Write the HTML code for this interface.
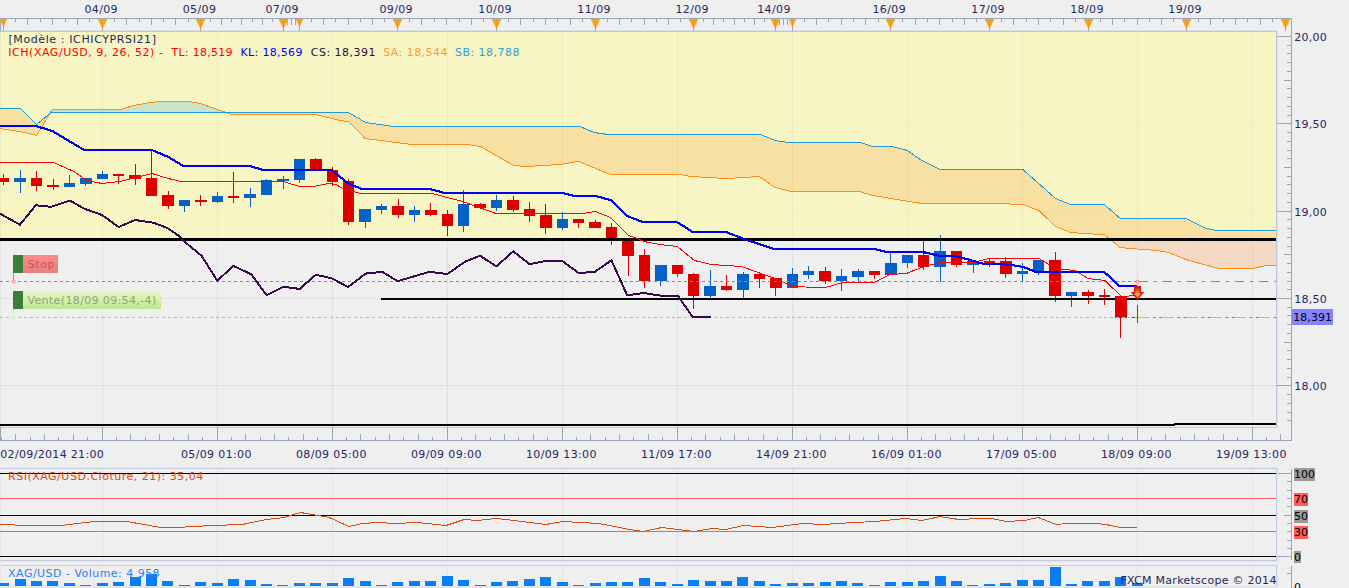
<!DOCTYPE html>
<html><head><meta charset="utf-8"><title>XAG/USD</title>
<style>
html,body{margin:0;padding:0;background:#efefef;}
body{width:1349px;height:588px;overflow:hidden;}
svg{display:block;font-family:'DejaVu Sans','Liberation Sans',sans-serif;font-size:11px;}
</style></head><body>
<svg width="1349" height="588" viewBox="0 0 1349 588">
<defs>
<linearGradient id="stopg" x1="0" y1="0" x2="0" y2="1"><stop offset="0" stop-color="#ff8a8a"/><stop offset="1" stop-color="#e88080"/></linearGradient>
<linearGradient id="venteg" x1="0" y1="0" x2="0" y2="1"><stop offset="0" stop-color="#e9f8c6"/><stop offset="1" stop-color="#bfe68e"/></linearGradient>
<linearGradient id="arr" x1="0" y1="0" x2="0" y2="1"><stop offset="0" stop-color="#c0200c"/><stop offset="0.55" stop-color="#f08a30"/><stop offset="1" stop-color="#ffc868"/></linearGradient>
<linearGradient id="cl" gradientUnits="userSpaceOnUse" x1="0" y1="238" x2="0" y2="238.01"><stop offset="0" stop-color="#f8e0a2"/><stop offset="1" stop-color="#f4dac3"/></linearGradient>
<clipPath id="cp"><rect x="0" y="31" width="1276" height="396"/></clipPath>
</defs>
<rect x="0" y="0" width="1349" height="588" fill="#efefef"/>
<!-- main chart background -->
<rect x="0" y="30" width="1278" height="1" fill="#dde2ec"/><rect x="0" y="31" width="1277" height="1" fill="#bcc7db"/>
<rect x="0" y="32" width="1276" height="207" fill="#f7f5c3"/>
<rect x="1276" y="31" width="1" height="397" fill="#bcc7db"/><rect x="1277" y="31" width="1" height="397" fill="#dde2ec"/>
<rect x="102" y="469" width="1" height="91" fill="#e2e2e2"/>
<rect x="102" y="566" width="1" height="20" fill="#e2e2e2"/>
<rect x="217" y="469" width="1" height="91" fill="#e2e2e2"/>
<rect x="217" y="566" width="1" height="20" fill="#e2e2e2"/>
<rect x="332" y="469" width="1" height="91" fill="#e2e2e2"/>
<rect x="332" y="566" width="1" height="20" fill="#e2e2e2"/>
<rect x="447" y="469" width="1" height="91" fill="#e2e2e2"/>
<rect x="447" y="566" width="1" height="20" fill="#e2e2e2"/>
<rect x="562" y="469" width="1" height="91" fill="#e2e2e2"/>
<rect x="562" y="566" width="1" height="20" fill="#e2e2e2"/>
<rect x="677" y="469" width="1" height="91" fill="#e2e2e2"/>
<rect x="677" y="566" width="1" height="20" fill="#e2e2e2"/>
<rect x="792" y="469" width="1" height="91" fill="#e2e2e2"/>
<rect x="792" y="566" width="1" height="20" fill="#e2e2e2"/>
<rect x="907" y="469" width="1" height="91" fill="#e2e2e2"/>
<rect x="907" y="566" width="1" height="20" fill="#e2e2e2"/>
<rect x="1022" y="469" width="1" height="91" fill="#e2e2e2"/>
<rect x="1022" y="566" width="1" height="20" fill="#e2e2e2"/>
<rect x="1137" y="469" width="1" height="91" fill="#e2e2e2"/>
<rect x="1137" y="566" width="1" height="20" fill="#e2e2e2"/>
<rect x="1252" y="469" width="1" height="91" fill="#e2e2e2"/>
<rect x="1252" y="566" width="1" height="20" fill="#e2e2e2"/>
<rect x="0" y="32" width="1" height="206" fill="#e9e7bd"/><rect x="0" y="241" width="1" height="186" fill="#e3e3e7"/>
<g clip-path="url(#cp)">
<polygon points="0.0,108.4 20.4,108.4 25.5,113.3 36.5,124.0 50.0,113.2 50.0,113.2 36.5,135.4 25.5,132.0 20.4,131.2 0.0,127.8" fill="url(#cl)"/>
<polygon points="50.0,113.2 51.0,112.4 52.3,112.4 120.4,112.4 133.4,112.4 150.0,112.4 160.2,112.4 188.0,112.4 196.4,112.4 203.8,112.4 211.2,112.4 220.5,112.4 226.0,112.4 227.3,112.4 227.3,112.4 226.0,111.9 220.5,110.4 211.2,107.2 203.8,104.5 196.4,102.6 188.0,101.5 160.2,101.5 150.0,102.6 133.4,105.6 120.4,109.4 52.3,109.4 51.0,111.5 50.0,113.2" fill="#c9e4c8"/>
<polygon points="227.3,112.4 231.6,112.4 315.9,112.4 331.7,112.4 340.0,112.4 348.4,112.4 365.2,122.1 365.7,122.4 393.8,126.2 411.6,126.2 467.8,126.2 480.5,126.2 513.7,126.2 526.4,126.2 559.6,126.2 578.7,126.2 580.0,126.2 594.0,132.0 608.0,134.4 610.6,134.4 680.4,134.4 690.6,134.4 726.3,134.4 759.5,134.4 760.8,134.4 774.8,140.3 788.8,142.3 791.4,142.3 859.0,142.3 860.3,142.3 873.0,146.1 892.1,146.1 907.4,150.5 920.2,158.9 921.5,159.6 939.8,169.3 996.7,169.2 1022.8,169.2 1023.3,169.6 1038.8,183.3 1055.6,198.1 1070.4,204.1 1100.0,204.1 1104.3,204.1 1104.6,204.4 1111.5,210.4 1119.9,217.8 1120.3,218.1 1129.0,218.1 1145.9,218.1 1156.6,218.1 1168.9,218.1 1185.7,218.1 1186.3,218.1 1204.0,227.0 1205.7,227.9 1217.3,230.2 1218.6,230.2 1253.0,230.2 1266.0,230.2 1276.0,230.2 1276.0,265.3 1266.0,265.5 1253.0,268.6 1218.6,268.6 1217.3,268.2 1205.7,264.8 1204.0,264.3 1186.3,259.6 1185.7,259.4 1168.9,252.0 1156.6,250.5 1145.9,249.0 1129.0,248.7 1120.3,247.5 1119.9,247.4 1111.5,240.1 1104.6,234.4 1104.3,234.4 1100.0,234.0 1070.4,232.0 1055.6,225.8 1038.8,210.3 1023.3,204.1 1022.8,204.1 996.7,203.0 939.8,203.0 921.5,203.0 920.2,202.8 907.4,200.6 892.1,198.0 873.0,194.8 860.3,191.6 859.0,191.3 791.4,191.3 788.8,190.6 774.8,186.9 760.8,177.1 759.5,176.2 726.3,178.3 690.6,176.2 680.4,174.2 610.6,174.2 608.0,173.2 594.0,167.5 580.0,161.9 578.7,161.4 559.6,164.5 526.4,166.5 513.7,165.3 480.5,146.6 467.8,144.3 411.6,144.3 393.8,141.9 365.7,138.1 365.2,138.0 348.4,121.0 340.0,120.6 331.7,118.7 315.9,114.0 231.6,114.0 227.3,112.4" fill="url(#cl)"/>
<rect x="102" y="32" width="1" height="206" fill="#000" fill-opacity="0.035"/>
<rect x="102" y="241" width="1" height="186" fill="#000" fill-opacity="0.055"/>
<rect x="217" y="32" width="1" height="206" fill="#000" fill-opacity="0.035"/>
<rect x="217" y="241" width="1" height="186" fill="#000" fill-opacity="0.055"/>
<rect x="332" y="32" width="1" height="206" fill="#000" fill-opacity="0.035"/>
<rect x="332" y="241" width="1" height="186" fill="#000" fill-opacity="0.055"/>
<rect x="447" y="32" width="1" height="206" fill="#000" fill-opacity="0.035"/>
<rect x="447" y="241" width="1" height="186" fill="#000" fill-opacity="0.055"/>
<rect x="562" y="32" width="1" height="206" fill="#000" fill-opacity="0.035"/>
<rect x="562" y="241" width="1" height="186" fill="#000" fill-opacity="0.055"/>
<rect x="677" y="32" width="1" height="206" fill="#000" fill-opacity="0.035"/>
<rect x="677" y="241" width="1" height="186" fill="#000" fill-opacity="0.055"/>
<rect x="792" y="32" width="1" height="206" fill="#000" fill-opacity="0.035"/>
<rect x="792" y="241" width="1" height="186" fill="#000" fill-opacity="0.055"/>
<rect x="907" y="32" width="1" height="206" fill="#000" fill-opacity="0.035"/>
<rect x="907" y="241" width="1" height="186" fill="#000" fill-opacity="0.055"/>
<rect x="1022" y="32" width="1" height="206" fill="#000" fill-opacity="0.035"/>
<rect x="1022" y="241" width="1" height="186" fill="#000" fill-opacity="0.055"/>
<rect x="1137" y="32" width="1" height="206" fill="#000" fill-opacity="0.035"/>
<rect x="1137" y="241" width="1" height="186" fill="#000" fill-opacity="0.055"/>
<rect x="1252" y="32" width="1" height="206" fill="#000" fill-opacity="0.035"/>
<rect x="1252" y="241" width="1" height="186" fill="#000" fill-opacity="0.055"/>
<rect x="0" y="123" width="1276" height="1" fill="#000" fill-opacity="0.025"/>
<rect x="0" y="211" width="1276" height="1" fill="#000" fill-opacity="0.025"/>
<rect x="0" y="298" width="1276" height="1" fill="#000" fill-opacity="0.055"/>
<rect x="0" y="385" width="1276" height="1" fill="#000" fill-opacity="0.055"/>
<polyline points="0.0,128.5 25.5,132.5 36.5,135.5 52.3,109.5 120.4,109.5 133.4,105.5 150.0,102.5 160.2,101.5 188.0,101.5 196.4,102.5 203.8,104.5 211.2,107.5 220.5,110.5 226.0,112.5 231.6,114.5 315.9,114.5 331.7,118.5 340.0,120.5 348.4,121.5 365.2,138.5 411.6,144.5 467.8,144.5 480.5,146.5 513.7,165.5 526.4,166.5 559.6,164.5 578.7,161.5 610.6,174.5 680.4,174.5 690.6,176.5 726.3,178.5 759.5,176.5 774.8,187.5 791.4,191.5 859.0,191.5 873.0,195.5 921.5,203.5 996.7,203.5 1023.3,204.5 1038.8,210.5 1055.6,226.5 1070.4,232.5 1100.0,234.5 1104.6,234.5 1111.5,240.5 1119.9,247.5 1129.0,248.5 1145.9,249.5 1156.6,250.5 1168.9,252.5 1185.7,259.5 1204.0,264.5 1218.6,268.5 1253.0,268.5 1266.0,265.5 1276.0,265.5" fill="none" stroke="#fd8e1c" stroke-width="1" shape-rendering="crispEdges"/>
<polyline points="0.0,108.5 20.4,108.5 36.5,124.5 51.0,112.5 340.0,112.5 348.4,112.5 365.7,122.5 393.8,126.5 580.0,126.5 594.0,132.5 608.0,134.5 760.8,134.5 774.8,140.5 788.8,142.5 860.3,142.5 873.0,146.5 892.1,146.5 907.4,150.5 920.2,159.5 939.8,169.5 1022.8,169.5 1055.6,198.5 1070.4,204.5 1104.3,204.5 1120.3,218.5 1186.3,218.5 1205.7,228.5 1217.3,230.5 1276.0,230.5" fill="none" stroke="#1f9adb" stroke-width="1" shape-rendering="crispEdges"/>
<rect x="3" y="174" width="1" height="11" fill="#dc0000"/>
<rect x="-2" y="178" width="11" height="4" fill="#dc0000"/>
<rect x="20" y="170" width="1" height="23" fill="#0560c8"/>
<rect x="14" y="178" width="12" height="4" fill="#0560c8"/>
<rect x="36" y="171" width="1" height="20" fill="#dc0000"/>
<rect x="31" y="178" width="11" height="8" fill="#dc0000"/>
<rect x="53" y="179" width="1" height="11" fill="#dc0000"/>
<rect x="47" y="185" width="12" height="2" fill="#dc0000"/>
<rect x="69" y="175" width="1" height="12" fill="#0560c8"/>
<rect x="64" y="183" width="11" height="4" fill="#0560c8"/>
<rect x="85" y="178" width="1" height="8" fill="#0560c8"/>
<rect x="80" y="178" width="12" height="6" fill="#0560c8"/>
<rect x="102" y="171" width="1" height="8" fill="#0560c8"/>
<rect x="97" y="174" width="11" height="5" fill="#0560c8"/>
<rect x="118" y="174" width="1" height="10" fill="#dc0000"/>
<rect x="113" y="174" width="11" height="2" fill="#dc0000"/>
<rect x="135" y="164" width="1" height="21" fill="#dc0000"/>
<rect x="129" y="175" width="12" height="4" fill="#dc0000"/>
<rect x="151" y="151" width="1" height="45" fill="#dc0000"/>
<rect x="146" y="178" width="11" height="18" fill="#dc0000"/>
<rect x="168" y="191" width="1" height="18" fill="#dc0000"/>
<rect x="162" y="195" width="12" height="11" fill="#dc0000"/>
<rect x="184" y="200" width="1" height="12" fill="#0560c8"/>
<rect x="179" y="200" width="11" height="6" fill="#0560c8"/>
<rect x="200" y="195" width="1" height="11" fill="#dc0000"/>
<rect x="195" y="200" width="12" height="2" fill="#dc0000"/>
<rect x="217" y="192" width="1" height="11" fill="#0560c8"/>
<rect x="212" y="196" width="11" height="6" fill="#0560c8"/>
<rect x="233" y="172" width="1" height="31" fill="#dc0000"/>
<rect x="228" y="196" width="11" height="2" fill="#dc0000"/>
<rect x="250" y="188" width="1" height="19" fill="#0560c8"/>
<rect x="244" y="194" width="12" height="4" fill="#0560c8"/>
<rect x="266" y="179" width="1" height="16" fill="#0560c8"/>
<rect x="261" y="180" width="11" height="15" fill="#0560c8"/>
<rect x="283" y="176" width="1" height="13" fill="#0560c8"/>
<rect x="277" y="179" width="12" height="2" fill="#0560c8"/>
<rect x="299" y="159" width="1" height="24" fill="#0560c8"/>
<rect x="294" y="159" width="11" height="21" fill="#0560c8"/>
<rect x="315" y="158" width="1" height="11" fill="#dc0000"/>
<rect x="310" y="159" width="12" height="10" fill="#dc0000"/>
<rect x="332" y="167" width="1" height="19" fill="#dc0000"/>
<rect x="327" y="170" width="11" height="12" fill="#dc0000"/>
<rect x="348" y="179" width="1" height="46" fill="#dc0000"/>
<rect x="343" y="181" width="11" height="41" fill="#dc0000"/>
<rect x="365" y="209" width="1" height="19" fill="#0560c8"/>
<rect x="359" y="209" width="12" height="13" fill="#0560c8"/>
<rect x="381" y="204" width="1" height="10" fill="#0560c8"/>
<rect x="376" y="206" width="11" height="4" fill="#0560c8"/>
<rect x="398" y="199" width="1" height="19" fill="#dc0000"/>
<rect x="392" y="206" width="12" height="9" fill="#dc0000"/>
<rect x="414" y="206" width="1" height="16" fill="#0560c8"/>
<rect x="409" y="210" width="11" height="5" fill="#0560c8"/>
<rect x="430" y="203" width="1" height="13" fill="#dc0000"/>
<rect x="425" y="210" width="12" height="5" fill="#dc0000"/>
<rect x="447" y="210" width="1" height="26" fill="#dc0000"/>
<rect x="442" y="214" width="11" height="12" fill="#dc0000"/>
<rect x="463" y="190" width="1" height="42" fill="#0560c8"/>
<rect x="458" y="204" width="11" height="22" fill="#0560c8"/>
<rect x="480" y="203" width="1" height="6" fill="#dc0000"/>
<rect x="474" y="204" width="12" height="4" fill="#dc0000"/>
<rect x="496" y="195" width="1" height="16" fill="#0560c8"/>
<rect x="491" y="200" width="11" height="8" fill="#0560c8"/>
<rect x="513" y="196" width="1" height="16" fill="#dc0000"/>
<rect x="507" y="200" width="12" height="10" fill="#dc0000"/>
<rect x="529" y="202" width="1" height="20" fill="#dc0000"/>
<rect x="524" y="209" width="11" height="7" fill="#dc0000"/>
<rect x="545" y="204" width="1" height="30" fill="#dc0000"/>
<rect x="540" y="215" width="12" height="13" fill="#dc0000"/>
<rect x="562" y="212" width="1" height="18" fill="#0560c8"/>
<rect x="557" y="219" width="11" height="9" fill="#0560c8"/>
<rect x="578" y="219" width="1" height="9" fill="#dc0000"/>
<rect x="573" y="219" width="11" height="4" fill="#dc0000"/>
<rect x="595" y="220" width="1" height="8" fill="#dc0000"/>
<rect x="589" y="222" width="12" height="6" fill="#dc0000"/>
<rect x="611" y="223" width="1" height="22" fill="#dc0000"/>
<rect x="606" y="227" width="11" height="13" fill="#dc0000"/>
<rect x="628" y="240" width="1" height="36" fill="#dc0000"/>
<rect x="622" y="240" width="12" height="16" fill="#dc0000"/>
<rect x="644" y="249" width="1" height="39" fill="#dc0000"/>
<rect x="639" y="255" width="11" height="26" fill="#dc0000"/>
<rect x="660" y="265" width="1" height="21" fill="#0560c8"/>
<rect x="655" y="265" width="12" height="16" fill="#0560c8"/>
<rect x="677" y="265" width="1" height="12" fill="#dc0000"/>
<rect x="672" y="265" width="11" height="9" fill="#dc0000"/>
<rect x="693" y="273" width="1" height="36" fill="#dc0000"/>
<rect x="688" y="274" width="11" height="22" fill="#dc0000"/>
<rect x="710" y="270" width="1" height="28" fill="#0560c8"/>
<rect x="704" y="286" width="12" height="10" fill="#0560c8"/>
<rect x="726" y="275" width="1" height="16" fill="#dc0000"/>
<rect x="721" y="286" width="11" height="4" fill="#dc0000"/>
<rect x="743" y="272" width="1" height="26" fill="#0560c8"/>
<rect x="737" y="274" width="12" height="16" fill="#0560c8"/>
<rect x="759" y="273" width="1" height="15" fill="#dc0000"/>
<rect x="754" y="274" width="11" height="5" fill="#dc0000"/>
<rect x="775" y="278" width="1" height="18" fill="#dc0000"/>
<rect x="770" y="278" width="12" height="10" fill="#dc0000"/>
<rect x="792" y="268" width="1" height="20" fill="#0560c8"/>
<rect x="787" y="274" width="11" height="14" fill="#0560c8"/>
<rect x="808" y="266" width="1" height="13" fill="#0560c8"/>
<rect x="803" y="271" width="11" height="4" fill="#0560c8"/>
<rect x="825" y="267" width="1" height="17" fill="#dc0000"/>
<rect x="819" y="271" width="12" height="10" fill="#dc0000"/>
<rect x="841" y="269" width="1" height="22" fill="#0560c8"/>
<rect x="836" y="276" width="11" height="5" fill="#0560c8"/>
<rect x="858" y="269" width="1" height="12" fill="#0560c8"/>
<rect x="852" y="271" width="12" height="6" fill="#0560c8"/>
<rect x="874" y="271" width="1" height="8" fill="#dc0000"/>
<rect x="869" y="271" width="11" height="4" fill="#dc0000"/>
<rect x="890" y="253" width="1" height="22" fill="#0560c8"/>
<rect x="885" y="263" width="12" height="12" fill="#0560c8"/>
<rect x="907" y="255" width="1" height="13" fill="#0560c8"/>
<rect x="902" y="255" width="11" height="8" fill="#0560c8"/>
<rect x="923" y="240" width="1" height="30" fill="#dc0000"/>
<rect x="918" y="255" width="11" height="12" fill="#dc0000"/>
<rect x="940" y="235" width="1" height="47" fill="#0560c8"/>
<rect x="934" y="251" width="12" height="16" fill="#0560c8"/>
<rect x="956" y="251" width="1" height="16" fill="#dc0000"/>
<rect x="951" y="251" width="11" height="14" fill="#dc0000"/>
<rect x="973" y="261" width="1" height="12" fill="#0560c8"/>
<rect x="967" y="261" width="12" height="4" fill="#0560c8"/>
<rect x="989" y="258" width="1" height="9" fill="#dc0000"/>
<rect x="984" y="261" width="11" height="2" fill="#dc0000"/>
<rect x="1005" y="257" width="1" height="21" fill="#dc0000"/>
<rect x="1000" y="261" width="12" height="13" fill="#dc0000"/>
<rect x="1022" y="263" width="1" height="18" fill="#0560c8"/>
<rect x="1017" y="271" width="11" height="3" fill="#0560c8"/>
<rect x="1038" y="260" width="1" height="15" fill="#0560c8"/>
<rect x="1033" y="260" width="11" height="11" fill="#0560c8"/>
<rect x="1055" y="252" width="1" height="50" fill="#dc0000"/>
<rect x="1049" y="260" width="12" height="36" fill="#dc0000"/>
<rect x="1071" y="292" width="1" height="15" fill="#0560c8"/>
<rect x="1066" y="292" width="11" height="4" fill="#0560c8"/>
<rect x="1088" y="290" width="1" height="14" fill="#dc0000"/>
<rect x="1082" y="292" width="12" height="4" fill="#dc0000"/>
<rect x="1104" y="289" width="1" height="16" fill="#dc0000"/>
<rect x="1099" y="295" width="11" height="2" fill="#dc0000"/>
<rect x="1120" y="296" width="1" height="42" fill="#dc0000"/>
<rect x="1115" y="296" width="12" height="22" fill="#dc0000"/>
<rect x="1137" y="305" width="1" height="18" fill="#0560c8"/>
<rect x="0" y="238" width="1276" height="3" fill="#000"/>
<rect x="381" y="298" width="895" height="2" fill="#000"/>
<rect x="0" y="424" width="1175" height="2" fill="#000"/>
<rect x="1174" y="423" width="102" height="2" fill="#000"/>
<rect x="1120" y="296" width="1" height="42" fill="#dc0000"/>
<rect x="1115" y="296" width="12" height="22" fill="#dc0000"/>
<line x1="0" y1="281.5" x2="1137" y2="281.5" stroke="#ff5555" stroke-width="1" stroke-dasharray="3 3"/>
<line x1="1138.3" y1="281.5" x2="1276" y2="281.5" stroke="#ff5555" stroke-width="1" stroke-dasharray="9.4 5.9 2.9 5.94"/>
<line x1="0" y1="317.5" x2="1137" y2="317.5" stroke="#a6cf86" stroke-width="1" stroke-dasharray="3 3"/>
<line x1="1138.3" y1="317.5" x2="1276" y2="317.5" stroke="#a6cf86" stroke-width="1" stroke-dasharray="9.5 6.2 2.5 5.94"/>
<line x1="1147.8" y1="317.5" x2="1276" y2="317.5" stroke="#6a6aff" stroke-width="1" stroke-dasharray="1 4.2 2.4 4 2.7 9.84"/>
<line x1="1132" y1="317.5" x2="1134.5" y2="317.5" stroke="#1040c0" stroke-width="1"/>
<polyline points="0.0,162.5 53.6,162.5 74.0,171.5 86.7,180.5 102.0,183.5 120.0,181.5 151.8,173.5 168.4,178.5 181.0,181.5 283.0,181.5 299.7,186.5 313.8,186.5 329.0,183.5 336.0,184.5 342.8,188.5 360.6,193.5 432.0,193.5 462.7,201.5 495.8,213.5 582.6,213.5 595.3,211.5 610.6,217.5 628.5,235.5 634.8,237.5 643.8,241.5 660.0,244.5 677.3,246.5 694.4,260.5 711.0,264.5 741.6,266.5 774.8,278.5 792.7,286.5 818.2,287.5 825.8,287.5 842.4,282.5 874.3,282.5 889.6,274.5 906.2,273.5 924.0,266.5 940.6,262.5 973.8,262.5 989.0,258.5 1038.8,258.5 1055.6,268.5 1075.0,270.5 1088.0,278.5 1104.8,280.5 1121.6,296.5 1137.4,295.5" fill="none" stroke="#fa0505" stroke-width="1" stroke-linejoin="round" shape-rendering="crispEdges"/>
<polyline points="0.0,126.0 35.7,126.0 52.3,131.0 84.2,150.0 151.8,150.0 168.4,157.0 183.2,166.0 250.0,166.0 262.8,170.0 331.6,170.0 349.0,184.0 362.0,189.0 429.5,189.0 444.8,193.0 562.0,193.0 575.0,196.0 595.3,196.0 610.6,200.0 627.2,216.0 642.5,222.0 677.0,222.0 692.7,232.0 725.8,232.0 744.2,239.0 773.5,249.0 874.3,249.0 887.0,252.0 922.8,252.0 940.6,256.0 956.0,256.0 984.0,264.0 1000.0,264.0 1011.6,265.0 1023.3,267.0 1036.2,272.0 1104.3,272.0 1119.5,286.0 1137.4,286.0" fill="none" stroke="#0000f0" stroke-width="2.2" stroke-linejoin="round" shape-rendering="crispEdges"/>
<polyline points="0.0,213.7 20.0,224.7 35.7,205.3 51.0,206.8 70.0,200.5 84.0,208.6 102.0,215.0 118.6,227.0 135.0,220.0 153.0,222.6 167.0,227.8 181.0,237.4 183.7,241.0 201.5,255.7 217.3,280.7 233.4,265.9 251.3,274.3 266.6,295.3 283.2,286.8 299.7,288.9 315.8,274.8 331.6,278.2 347.9,287.0 365.7,273.6 382.3,271.8 397.6,281.2 429.5,271.8 447.3,274.1 465.2,261.6 480.0,255.7 496.3,266.4 513.2,251.4 529.5,264.1 546.8,260.8 562.1,260.8 578.7,273.1 594.8,271.8 611.4,260.3 627.2,295.3 643.8,293.0 661.6,295.8 677.9,295.8 692.7,317.0 711.0,317.0" fill="none" stroke="#36084a" stroke-width="2" stroke-linejoin="round" shape-rendering="crispEdges"/>
<polygon points="1134,286 1141,286 1141,292 1144.3,292 1137.5,300 1130.7,292 1134,292" fill="#e21414"/><polygon points="1135.4,287.3 1139.6,287.3 1139.6,293.2 1141.3,293.2 1137.5,297.6 1133.7,293.2 1135.4,293.2" fill="url(#arr)"/><circle cx="1137.5" cy="281.5" r="1.4" fill="#efefef" stroke="#ff5a5a" stroke-width="0.8"/><circle cx="1137.5" cy="317.5" r="1.5" fill="none" stroke="#9acb7a" stroke-width="0.8"/>
</g>
<rect x="13" y="255" width="10" height="18" fill="#3b7d3b"/>
<rect x="23" y="255" width="35" height="18" fill="url(#stopg)"/>
<text x="27.8" y="268" fill="#c8525e" textLength="26.6">Stop</text>
<rect x="13" y="273" width="1" height="7" fill="#ff6a6a"/>
<circle cx="13.5" cy="281.5" r="1.5" fill="#efefef" stroke="#ff5a5a" stroke-width="0.8"/>
<rect x="13" y="291" width="10" height="18" fill="#3b7d3b"/>
<rect x="23" y="291" width="138" height="18" fill="url(#venteg)"/>
<text x="27.4" y="304" fill="#8aa878" textLength="128.8">Vente(18/09 09:54,-4)</text>
<rect x="13" y="309" width="1" height="7" fill="#d8efb8"/>
<circle cx="13.5" cy="317.5" r="1.5" fill="#efefef" stroke="#d0ecb0" stroke-width="0.8"/>
<rect x="0" y="18" width="1292" height="1" fill="#9aa6ba"/>
<rect x="0" y="19" width="1" height="12" fill="#9aa6ba"/>
<rect x="1291" y="18" width="1" height="423" fill="#9aa6ba"/>
<rect x="15" y="19" width="1" height="3" fill="#9aa6ba"/>
<rect x="27" y="19" width="1" height="6" fill="#9aa6ba"/>
<rect x="40" y="19" width="1" height="3" fill="#9aa6ba"/>
<rect x="52" y="19" width="1" height="6" fill="#9aa6ba"/>
<rect x="65" y="19" width="1" height="3" fill="#9aa6ba"/>
<rect x="77" y="19" width="1" height="6" fill="#9aa6ba"/>
<rect x="89" y="19" width="1" height="3" fill="#9aa6ba"/>
<rect x="114" y="19" width="1" height="3" fill="#9aa6ba"/>
<rect x="126" y="19" width="1" height="6" fill="#9aa6ba"/>
<rect x="139" y="19" width="1" height="3" fill="#9aa6ba"/>
<rect x="151" y="19" width="1" height="6" fill="#9aa6ba"/>
<rect x="163" y="19" width="1" height="3" fill="#9aa6ba"/>
<rect x="175" y="19" width="1" height="6" fill="#9aa6ba"/>
<rect x="188" y="19" width="1" height="3" fill="#9aa6ba"/>
<rect x="210" y="19" width="1" height="3" fill="#9aa6ba"/>
<rect x="221" y="19" width="1" height="6" fill="#9aa6ba"/>
<rect x="231" y="19" width="1" height="3" fill="#9aa6ba"/>
<rect x="241" y="19" width="1" height="6" fill="#9aa6ba"/>
<rect x="252" y="19" width="1" height="3" fill="#9aa6ba"/>
<rect x="262" y="19" width="1" height="6" fill="#9aa6ba"/>
<rect x="272" y="19" width="1" height="3" fill="#9aa6ba"/>
<rect x="311" y="19" width="1" height="3" fill="#9aa6ba"/>
<rect x="323" y="19" width="1" height="6" fill="#9aa6ba"/>
<rect x="335" y="19" width="1" height="3" fill="#9aa6ba"/>
<rect x="348" y="19" width="1" height="6" fill="#9aa6ba"/>
<rect x="360" y="19" width="1" height="3" fill="#9aa6ba"/>
<rect x="372" y="19" width="1" height="6" fill="#9aa6ba"/>
<rect x="384" y="19" width="1" height="3" fill="#9aa6ba"/>
<rect x="409" y="19" width="1" height="3" fill="#9aa6ba"/>
<rect x="421" y="19" width="1" height="6" fill="#9aa6ba"/>
<rect x="434" y="19" width="1" height="3" fill="#9aa6ba"/>
<rect x="446" y="19" width="1" height="6" fill="#9aa6ba"/>
<rect x="459" y="19" width="1" height="3" fill="#9aa6ba"/>
<rect x="471" y="19" width="1" height="6" fill="#9aa6ba"/>
<rect x="483" y="19" width="1" height="3" fill="#9aa6ba"/>
<rect x="508" y="19" width="1" height="3" fill="#9aa6ba"/>
<rect x="520" y="19" width="1" height="6" fill="#9aa6ba"/>
<rect x="533" y="19" width="1" height="3" fill="#9aa6ba"/>
<rect x="545" y="19" width="1" height="6" fill="#9aa6ba"/>
<rect x="557" y="19" width="1" height="3" fill="#9aa6ba"/>
<rect x="570" y="19" width="1" height="6" fill="#9aa6ba"/>
<rect x="582" y="19" width="1" height="3" fill="#9aa6ba"/>
<rect x="607" y="19" width="1" height="3" fill="#9aa6ba"/>
<rect x="619" y="19" width="1" height="6" fill="#9aa6ba"/>
<rect x="631" y="19" width="1" height="3" fill="#9aa6ba"/>
<rect x="644" y="19" width="1" height="6" fill="#9aa6ba"/>
<rect x="656" y="19" width="1" height="3" fill="#9aa6ba"/>
<rect x="668" y="19" width="1" height="6" fill="#9aa6ba"/>
<rect x="680" y="19" width="1" height="3" fill="#9aa6ba"/>
<rect x="703" y="19" width="1" height="3" fill="#9aa6ba"/>
<rect x="713" y="19" width="1" height="6" fill="#9aa6ba"/>
<rect x="723" y="19" width="1" height="3" fill="#9aa6ba"/>
<rect x="734" y="19" width="1" height="6" fill="#9aa6ba"/>
<rect x="744" y="19" width="1" height="3" fill="#9aa6ba"/>
<rect x="754" y="19" width="1" height="6" fill="#9aa6ba"/>
<rect x="764" y="19" width="1" height="3" fill="#9aa6ba"/>
<rect x="804" y="19" width="1" height="3" fill="#9aa6ba"/>
<rect x="816" y="19" width="1" height="6" fill="#9aa6ba"/>
<rect x="828" y="19" width="1" height="3" fill="#9aa6ba"/>
<rect x="841" y="19" width="1" height="6" fill="#9aa6ba"/>
<rect x="853" y="19" width="1" height="3" fill="#9aa6ba"/>
<rect x="865" y="19" width="1" height="6" fill="#9aa6ba"/>
<rect x="878" y="19" width="1" height="3" fill="#9aa6ba"/>
<rect x="902" y="19" width="1" height="3" fill="#9aa6ba"/>
<rect x="915" y="19" width="1" height="6" fill="#9aa6ba"/>
<rect x="927" y="19" width="1" height="3" fill="#9aa6ba"/>
<rect x="939" y="19" width="1" height="6" fill="#9aa6ba"/>
<rect x="952" y="19" width="1" height="3" fill="#9aa6ba"/>
<rect x="964" y="19" width="1" height="6" fill="#9aa6ba"/>
<rect x="976" y="19" width="1" height="3" fill="#9aa6ba"/>
<rect x="1001" y="19" width="1" height="3" fill="#9aa6ba"/>
<rect x="1013" y="19" width="1" height="6" fill="#9aa6ba"/>
<rect x="1026" y="19" width="1" height="3" fill="#9aa6ba"/>
<rect x="1038" y="19" width="1" height="6" fill="#9aa6ba"/>
<rect x="1050" y="19" width="1" height="3" fill="#9aa6ba"/>
<rect x="1063" y="19" width="1" height="6" fill="#9aa6ba"/>
<rect x="1075" y="19" width="1" height="3" fill="#9aa6ba"/>
<rect x="1100" y="19" width="1" height="3" fill="#9aa6ba"/>
<rect x="1112" y="19" width="1" height="6" fill="#9aa6ba"/>
<rect x="1124" y="19" width="1" height="3" fill="#9aa6ba"/>
<rect x="1137" y="19" width="1" height="6" fill="#9aa6ba"/>
<rect x="1149" y="19" width="1" height="3" fill="#9aa6ba"/>
<rect x="1161" y="19" width="1" height="6" fill="#9aa6ba"/>
<rect x="1173" y="19" width="1" height="3" fill="#9aa6ba"/>
<rect x="1198" y="19" width="1" height="3" fill="#9aa6ba"/>
<rect x="1210" y="19" width="1" height="6" fill="#9aa6ba"/>
<rect x="1223" y="19" width="1" height="3" fill="#9aa6ba"/>
<rect x="1235" y="19" width="1" height="6" fill="#9aa6ba"/>
<rect x="1247" y="19" width="1" height="3" fill="#9aa6ba"/>
<rect x="1260" y="19" width="1" height="6" fill="#9aa6ba"/>
<rect x="1272" y="19" width="1" height="3" fill="#9aa6ba"/>
<rect x="287" y="19" width="1" height="6" fill="#9aa6ba"/>
<rect x="291" y="19" width="1" height="6" fill="#9aa6ba"/>
<rect x="295" y="19" width="1" height="6" fill="#9aa6ba"/>
<rect x="779" y="19" width="1" height="6" fill="#9aa6ba"/>
<rect x="783" y="19" width="1" height="6" fill="#9aa6ba"/>
<rect x="787" y="19" width="1" height="6" fill="#9aa6ba"/>
<rect x="3" y="26" width="1" height="5" fill="#9aa6ba"/>
<rect x="3" y="32" width="1" height="2" fill="#e9e9b4"/>
<polygon points="-0.3,19 7.3,19 4.0,26 4.0,27 3.0,27 3.0,26" fill="#f9a31f"/>
<rect x="3" y="19" width="1" height="8" fill="#ec971b"/>
<rect x="102" y="28" width="1" height="3" fill="#9aa6ba"/>
<rect x="102" y="32" width="1" height="2" fill="#e9e9b4"/>
<polygon points="97.7,19 107.3,19 103.0,28 103.0,29 102.0,29 102.0,28" fill="#f9a31f"/>
<rect x="102" y="19" width="1" height="10" fill="#ec971b"/>
<rect x="200" y="28" width="1" height="3" fill="#9aa6ba"/>
<rect x="200" y="32" width="1" height="2" fill="#e9e9b4"/>
<polygon points="195.7,19 205.3,19 201.0,28 201.0,29 200.0,29 200.0,28" fill="#f9a31f"/>
<rect x="200" y="19" width="1" height="10" fill="#ec971b"/>
<rect x="283" y="28" width="1" height="3" fill="#9aa6ba"/>
<rect x="283" y="32" width="1" height="2" fill="#e9e9b4"/>
<polygon points="278.7,19 288.3,19 284.0,28 284.0,29 283.0,29 283.0,28" fill="#f9a31f"/>
<rect x="283" y="19" width="1" height="10" fill="#ec971b"/>
<rect x="299" y="26" width="1" height="5" fill="#9aa6ba"/>
<rect x="299" y="32" width="1" height="2" fill="#e9e9b4"/>
<polygon points="295.7,19 303.3,19 300.0,26 300.0,27 299.0,27 299.0,26" fill="#f9a31f"/>
<rect x="299" y="19" width="1" height="8" fill="#ec971b"/>
<rect x="397" y="28" width="1" height="3" fill="#9aa6ba"/>
<rect x="397" y="32" width="1" height="2" fill="#e9e9b4"/>
<polygon points="392.7,19 402.3,19 398.0,28 398.0,29 397.0,29 397.0,28" fill="#f9a31f"/>
<rect x="397" y="19" width="1" height="10" fill="#ec971b"/>
<rect x="496" y="28" width="1" height="3" fill="#9aa6ba"/>
<rect x="496" y="32" width="1" height="2" fill="#e9e9b4"/>
<polygon points="491.7,19 501.3,19 497.0,28 497.0,29 496.0,29 496.0,28" fill="#f9a31f"/>
<rect x="496" y="19" width="1" height="10" fill="#ec971b"/>
<rect x="595" y="28" width="1" height="3" fill="#9aa6ba"/>
<rect x="595" y="32" width="1" height="2" fill="#e9e9b4"/>
<polygon points="590.7,19 600.3,19 596.0,28 596.0,29 595.0,29 595.0,28" fill="#f9a31f"/>
<rect x="595" y="19" width="1" height="10" fill="#ec971b"/>
<rect x="693" y="28" width="1" height="3" fill="#9aa6ba"/>
<rect x="693" y="32" width="1" height="2" fill="#e9e9b4"/>
<polygon points="688.7,19 698.3,19 694.0,28 694.0,29 693.0,29 693.0,28" fill="#f9a31f"/>
<rect x="693" y="19" width="1" height="10" fill="#ec971b"/>
<rect x="775" y="28" width="1" height="3" fill="#9aa6ba"/>
<rect x="775" y="32" width="1" height="2" fill="#e9e9b4"/>
<polygon points="770.7,19 780.3,19 776.0,28 776.0,29 775.0,29 775.0,28" fill="#f9a31f"/>
<rect x="775" y="19" width="1" height="10" fill="#ec971b"/>
<rect x="792" y="26" width="1" height="5" fill="#9aa6ba"/>
<rect x="792" y="32" width="1" height="2" fill="#e9e9b4"/>
<polygon points="788.7,19 796.3,19 793.0,26 793.0,27 792.0,27 792.0,26" fill="#f9a31f"/>
<rect x="792" y="19" width="1" height="8" fill="#ec971b"/>
<rect x="890" y="28" width="1" height="3" fill="#9aa6ba"/>
<rect x="890" y="32" width="1" height="2" fill="#e9e9b4"/>
<polygon points="885.7,19 895.3,19 891.0,28 891.0,29 890.0,29 890.0,28" fill="#f9a31f"/>
<rect x="890" y="19" width="1" height="10" fill="#ec971b"/>
<rect x="989" y="28" width="1" height="3" fill="#9aa6ba"/>
<rect x="989" y="32" width="1" height="2" fill="#e9e9b4"/>
<polygon points="984.7,19 994.3,19 990.0,28 990.0,29 989.0,29 989.0,28" fill="#f9a31f"/>
<rect x="989" y="19" width="1" height="10" fill="#ec971b"/>
<rect x="1088" y="28" width="1" height="3" fill="#9aa6ba"/>
<rect x="1088" y="32" width="1" height="2" fill="#e9e9b4"/>
<polygon points="1083.7,19 1093.3,19 1089.0,28 1089.0,29 1088.0,29 1088.0,28" fill="#f9a31f"/>
<rect x="1088" y="19" width="1" height="10" fill="#ec971b"/>
<rect x="1186" y="28" width="1" height="3" fill="#9aa6ba"/>
<rect x="1186" y="32" width="1" height="2" fill="#e9e9b4"/>
<polygon points="1181.7,19 1191.3,19 1187.0,28 1187.0,29 1186.0,29 1186.0,28" fill="#f9a31f"/>
<rect x="1186" y="19" width="1" height="10" fill="#ec971b"/>
<rect x="1285" y="28" width="1" height="3" fill="#9aa6ba"/>
<rect x="1285" y="32" width="1" height="2" fill="#e9e9b4"/>
<polygon points="1280.7,19 1290.3,19 1286.0,28 1286.0,29 1285.0,29 1285.0,28" fill="#f9a31f"/>
<rect x="1285" y="19" width="1" height="10" fill="#ec971b"/>
<text x="84.4" y="13" fill="#262660" textLength="33.2">04/09</text>
<text x="182.7" y="13" fill="#262660" textLength="33.2">05/09</text>
<text x="265.4" y="13" fill="#262660" textLength="33.2">07/09</text>
<text x="379.4" y="13" fill="#262660" textLength="33.2">09/09</text>
<text x="478.3" y="13" fill="#262660" textLength="33.2">10/09</text>
<text x="577.3" y="13" fill="#262660" textLength="33.2">11/09</text>
<text x="675.4" y="13" fill="#262660" textLength="33.2">12/09</text>
<text x="757.2" y="13" fill="#262660" textLength="33.2">14/09</text>
<text x="872.5" y="13" fill="#262660" textLength="33.2">16/09</text>
<text x="971.3" y="13" fill="#262660" textLength="33.2">17/09</text>
<text x="1070.2" y="13" fill="#262660" textLength="33.2">18/09</text>
<text x="1168.3" y="13" fill="#262660" textLength="33.2">19/09</text>
<rect x="1277" y="36" width="14" height="1" fill="#9aa6ba"/>
<rect x="1287" y="45" width="4" height="1" fill="#9aa6ba"/>
<rect x="1287" y="53" width="4" height="1" fill="#9aa6ba"/>
<rect x="1287" y="62" width="4" height="1" fill="#9aa6ba"/>
<rect x="1287" y="71" width="4" height="1" fill="#9aa6ba"/>
<rect x="1284" y="80" width="7" height="1" fill="#9aa6ba"/>
<rect x="1287" y="88" width="4" height="1" fill="#9aa6ba"/>
<rect x="1287" y="97" width="4" height="1" fill="#9aa6ba"/>
<rect x="1287" y="106" width="4" height="1" fill="#9aa6ba"/>
<rect x="1287" y="115" width="4" height="1" fill="#9aa6ba"/>
<rect x="1277" y="123" width="14" height="1" fill="#9aa6ba"/>
<rect x="1287" y="132" width="4" height="1" fill="#9aa6ba"/>
<rect x="1287" y="141" width="4" height="1" fill="#9aa6ba"/>
<rect x="1287" y="150" width="4" height="1" fill="#9aa6ba"/>
<rect x="1287" y="158" width="4" height="1" fill="#9aa6ba"/>
<rect x="1284" y="167" width="7" height="1" fill="#9aa6ba"/>
<rect x="1287" y="176" width="4" height="1" fill="#9aa6ba"/>
<rect x="1287" y="184" width="4" height="1" fill="#9aa6ba"/>
<rect x="1287" y="193" width="4" height="1" fill="#9aa6ba"/>
<rect x="1287" y="202" width="4" height="1" fill="#9aa6ba"/>
<rect x="1277" y="211" width="14" height="1" fill="#9aa6ba"/>
<rect x="1287" y="219" width="4" height="1" fill="#9aa6ba"/>
<rect x="1287" y="228" width="4" height="1" fill="#9aa6ba"/>
<rect x="1287" y="237" width="4" height="1" fill="#9aa6ba"/>
<rect x="1287" y="246" width="4" height="1" fill="#9aa6ba"/>
<rect x="1284" y="254" width="7" height="1" fill="#9aa6ba"/>
<rect x="1287" y="263" width="4" height="1" fill="#9aa6ba"/>
<rect x="1287" y="272" width="4" height="1" fill="#9aa6ba"/>
<rect x="1287" y="281" width="4" height="1" fill="#9aa6ba"/>
<rect x="1287" y="289" width="4" height="1" fill="#9aa6ba"/>
<rect x="1277" y="298" width="14" height="1" fill="#9aa6ba"/>
<rect x="1287" y="307" width="4" height="1" fill="#9aa6ba"/>
<rect x="1287" y="315" width="4" height="1" fill="#9aa6ba"/>
<rect x="1287" y="324" width="4" height="1" fill="#9aa6ba"/>
<rect x="1287" y="333" width="4" height="1" fill="#9aa6ba"/>
<rect x="1284" y="342" width="7" height="1" fill="#9aa6ba"/>
<rect x="1287" y="350" width="4" height="1" fill="#9aa6ba"/>
<rect x="1287" y="359" width="4" height="1" fill="#9aa6ba"/>
<rect x="1287" y="368" width="4" height="1" fill="#9aa6ba"/>
<rect x="1287" y="377" width="4" height="1" fill="#9aa6ba"/>
<rect x="1277" y="385" width="14" height="1" fill="#9aa6ba"/>
<rect x="1287" y="394" width="4" height="1" fill="#9aa6ba"/>
<rect x="1287" y="403" width="4" height="1" fill="#9aa6ba"/>
<rect x="1287" y="412" width="4" height="1" fill="#9aa6ba"/>
<rect x="1287" y="420" width="4" height="1" fill="#9aa6ba"/>
<text x="1294.2" y="41" fill="#262660" textLength="32.6">20,00</text>
<text x="1294.2" y="128" fill="#262660" textLength="32.6">19,50</text>
<text x="1294.2" y="216" fill="#262660" textLength="32.6">19,00</text>
<text x="1294.2" y="303" fill="#262660" textLength="32.6">18,50</text>
<text x="1294.2" y="390" fill="#262660" textLength="32.6">18,00</text>
<rect x="0" y="427" width="1277" height="1" fill="#c3ccde"/>
<rect x="0" y="440" width="1292" height="1" fill="#9aa6ba"/>
<rect x="1" y="437" width="1" height="3" fill="#9aa6ba"/>
<rect x="15" y="434" width="1" height="6" fill="#9aa6ba"/>
<rect x="30" y="437" width="1" height="3" fill="#9aa6ba"/>
<rect x="44" y="434" width="1" height="6" fill="#9aa6ba"/>
<rect x="58" y="437" width="1" height="3" fill="#9aa6ba"/>
<rect x="73" y="434" width="1" height="6" fill="#9aa6ba"/>
<rect x="87" y="437" width="1" height="3" fill="#9aa6ba"/>
<rect x="102" y="427" width="1" height="13" fill="#9aa6ba"/>
<rect x="116" y="437" width="1" height="3" fill="#9aa6ba"/>
<rect x="130" y="434" width="1" height="6" fill="#9aa6ba"/>
<rect x="145" y="437" width="1" height="3" fill="#9aa6ba"/>
<rect x="159" y="434" width="1" height="6" fill="#9aa6ba"/>
<rect x="173" y="437" width="1" height="3" fill="#9aa6ba"/>
<rect x="188" y="434" width="1" height="6" fill="#9aa6ba"/>
<rect x="202" y="437" width="1" height="3" fill="#9aa6ba"/>
<rect x="217" y="427" width="1" height="13" fill="#9aa6ba"/>
<rect x="231" y="437" width="1" height="3" fill="#9aa6ba"/>
<rect x="245" y="434" width="1" height="6" fill="#9aa6ba"/>
<rect x="260" y="437" width="1" height="3" fill="#9aa6ba"/>
<rect x="274" y="434" width="1" height="6" fill="#9aa6ba"/>
<rect x="288" y="437" width="1" height="3" fill="#9aa6ba"/>
<rect x="303" y="434" width="1" height="6" fill="#9aa6ba"/>
<rect x="317" y="437" width="1" height="3" fill="#9aa6ba"/>
<rect x="332" y="427" width="1" height="13" fill="#9aa6ba"/>
<rect x="346" y="437" width="1" height="3" fill="#9aa6ba"/>
<rect x="360" y="434" width="1" height="6" fill="#9aa6ba"/>
<rect x="375" y="437" width="1" height="3" fill="#9aa6ba"/>
<rect x="389" y="434" width="1" height="6" fill="#9aa6ba"/>
<rect x="403" y="437" width="1" height="3" fill="#9aa6ba"/>
<rect x="418" y="434" width="1" height="6" fill="#9aa6ba"/>
<rect x="432" y="437" width="1" height="3" fill="#9aa6ba"/>
<rect x="447" y="427" width="1" height="13" fill="#9aa6ba"/>
<rect x="461" y="437" width="1" height="3" fill="#9aa6ba"/>
<rect x="475" y="434" width="1" height="6" fill="#9aa6ba"/>
<rect x="490" y="437" width="1" height="3" fill="#9aa6ba"/>
<rect x="504" y="434" width="1" height="6" fill="#9aa6ba"/>
<rect x="518" y="437" width="1" height="3" fill="#9aa6ba"/>
<rect x="533" y="434" width="1" height="6" fill="#9aa6ba"/>
<rect x="547" y="437" width="1" height="3" fill="#9aa6ba"/>
<rect x="562" y="427" width="1" height="13" fill="#9aa6ba"/>
<rect x="576" y="437" width="1" height="3" fill="#9aa6ba"/>
<rect x="590" y="434" width="1" height="6" fill="#9aa6ba"/>
<rect x="605" y="437" width="1" height="3" fill="#9aa6ba"/>
<rect x="619" y="434" width="1" height="6" fill="#9aa6ba"/>
<rect x="633" y="437" width="1" height="3" fill="#9aa6ba"/>
<rect x="648" y="434" width="1" height="6" fill="#9aa6ba"/>
<rect x="662" y="437" width="1" height="3" fill="#9aa6ba"/>
<rect x="677" y="427" width="1" height="13" fill="#9aa6ba"/>
<rect x="691" y="437" width="1" height="3" fill="#9aa6ba"/>
<rect x="705" y="434" width="1" height="6" fill="#9aa6ba"/>
<rect x="720" y="437" width="1" height="3" fill="#9aa6ba"/>
<rect x="734" y="434" width="1" height="6" fill="#9aa6ba"/>
<rect x="748" y="437" width="1" height="3" fill="#9aa6ba"/>
<rect x="763" y="434" width="1" height="6" fill="#9aa6ba"/>
<rect x="777" y="437" width="1" height="3" fill="#9aa6ba"/>
<rect x="792" y="427" width="1" height="13" fill="#9aa6ba"/>
<rect x="806" y="437" width="1" height="3" fill="#9aa6ba"/>
<rect x="820" y="434" width="1" height="6" fill="#9aa6ba"/>
<rect x="835" y="437" width="1" height="3" fill="#9aa6ba"/>
<rect x="849" y="434" width="1" height="6" fill="#9aa6ba"/>
<rect x="863" y="437" width="1" height="3" fill="#9aa6ba"/>
<rect x="878" y="434" width="1" height="6" fill="#9aa6ba"/>
<rect x="892" y="437" width="1" height="3" fill="#9aa6ba"/>
<rect x="907" y="427" width="1" height="13" fill="#9aa6ba"/>
<rect x="921" y="437" width="1" height="3" fill="#9aa6ba"/>
<rect x="935" y="434" width="1" height="6" fill="#9aa6ba"/>
<rect x="950" y="437" width="1" height="3" fill="#9aa6ba"/>
<rect x="964" y="434" width="1" height="6" fill="#9aa6ba"/>
<rect x="978" y="437" width="1" height="3" fill="#9aa6ba"/>
<rect x="993" y="434" width="1" height="6" fill="#9aa6ba"/>
<rect x="1007" y="437" width="1" height="3" fill="#9aa6ba"/>
<rect x="1022" y="427" width="1" height="13" fill="#9aa6ba"/>
<rect x="1036" y="437" width="1" height="3" fill="#9aa6ba"/>
<rect x="1050" y="434" width="1" height="6" fill="#9aa6ba"/>
<rect x="1065" y="437" width="1" height="3" fill="#9aa6ba"/>
<rect x="1079" y="434" width="1" height="6" fill="#9aa6ba"/>
<rect x="1093" y="437" width="1" height="3" fill="#9aa6ba"/>
<rect x="1108" y="434" width="1" height="6" fill="#9aa6ba"/>
<rect x="1122" y="437" width="1" height="3" fill="#9aa6ba"/>
<rect x="1137" y="427" width="1" height="13" fill="#9aa6ba"/>
<rect x="1151" y="437" width="1" height="3" fill="#9aa6ba"/>
<rect x="1165" y="434" width="1" height="6" fill="#9aa6ba"/>
<rect x="1180" y="437" width="1" height="3" fill="#9aa6ba"/>
<rect x="1194" y="434" width="1" height="6" fill="#9aa6ba"/>
<rect x="1208" y="437" width="1" height="3" fill="#9aa6ba"/>
<rect x="1223" y="434" width="1" height="6" fill="#9aa6ba"/>
<rect x="1237" y="437" width="1" height="3" fill="#9aa6ba"/>
<rect x="1252" y="427" width="1" height="13" fill="#9aa6ba"/>
<rect x="1266" y="437" width="1" height="3" fill="#9aa6ba"/>
<rect x="1280" y="434" width="1" height="6" fill="#9aa6ba"/>
<rect x="0" y="427" width="1" height="13" fill="#9aa6ba"/>
<text x="0.3" y="458" fill="#262660" textLength="103.5">02/09/2014 21:00</text>
<text x="181.0" y="458" fill="#262660" textLength="70.4">05/09 01:00</text>
<text x="296.0" y="458" fill="#262660" textLength="70.4">08/09 05:00</text>
<text x="411.0" y="458" fill="#262660" textLength="70.4">09/09 09:00</text>
<text x="526.0" y="458" fill="#262660" textLength="70.4">10/09 13:00</text>
<text x="641.0" y="458" fill="#262660" textLength="70.4">11/09 17:00</text>
<text x="756.0" y="458" fill="#262660" textLength="70.4">14/09 21:00</text>
<text x="871.0" y="458" fill="#262660" textLength="70.4">16/09 01:00</text>
<text x="986.0" y="458" fill="#262660" textLength="70.4">17/09 05:00</text>
<text x="1101.0" y="458" fill="#262660" textLength="70.4">18/09 09:00</text>
<text x="1216.0" y="458" fill="#262660" textLength="70.4">19/09 13:00</text>
<!-- price label -->
<rect x="1292" y="309" width="41" height="16" fill="#8484ff"/>
<text x="1293.2" y="321" fill="#000018" textLength="38.8">18,391</text>
<!-- legend -->
<text x="8.4" y="43" fill="#262660" textLength="147.6">[Modèle : ICHICYPRSI21]</text>
<text x="8.3" y="56" fill="#ff0000" textLength="154.6">ICH(XAG/USD, 9, 26, 52) -</text>
<text x="171.6" y="56" fill="#ff0000" textLength="60.8">TL: 18,519</text>
<text x="240.6" y="56" fill="#0000ff" textLength="61.8">KL: 18,569</text>
<text x="310.8" y="56" fill="#3a0a32" textLength="64.6">CS: 18,391</text>
<text x="383.2" y="56" fill="#ff9933" textLength="64.2">SA: 18,544</text>
<text x="455" y="56" fill="#2e9fdc" textLength="64.4">SB: 18,788</text>
<rect x="0" y="467" width="1278" height="1" fill="#e1e6ef"/>
<rect x="0" y="468" width="1277" height="1" fill="#c3cde0"/>
<rect x="1276" y="468" width="1" height="93" fill="#c3cde0"/><rect x="1277" y="468" width="1" height="94" fill="#e1e6ef"/>
<rect x="0" y="560" width="1277" height="1" fill="#c3cde0"/><rect x="0" y="561" width="1278" height="1" fill="#e1e6ef"/>
<rect x="0" y="468" width="1" height="93" fill="#e1e6ef"/>
<rect x="1291" y="469" width="1" height="91" fill="#9aa6ba"/>
<rect x="1277" y="473" width="14" height="1" fill="#9aa6ba"/>
<rect x="1287" y="481" width="4" height="1" fill="#9aa6ba"/>
<rect x="1287" y="490" width="4" height="1" fill="#9aa6ba"/>
<rect x="1287" y="498" width="4" height="1" fill="#9aa6ba"/>
<rect x="1287" y="506" width="4" height="1" fill="#9aa6ba"/>
<rect x="1284" y="515" width="7" height="1" fill="#9aa6ba"/>
<rect x="1287" y="523" width="4" height="1" fill="#9aa6ba"/>
<rect x="1287" y="531" width="4" height="1" fill="#9aa6ba"/>
<rect x="1287" y="540" width="4" height="1" fill="#9aa6ba"/>
<rect x="1287" y="548" width="4" height="1" fill="#9aa6ba"/>
<rect x="1277" y="556" width="14" height="1" fill="#9aa6ba"/>
<rect x="0" y="473" width="1276" height="1" fill="#000"/>
<rect x="0" y="498" width="1276" height="1" fill="#fb5c5c"/>
<rect x="0" y="515" width="1276" height="1" fill="#000"/>
<rect x="0" y="531" width="1276" height="1" fill="#fb5c5c"/>
<rect x="0" y="556" width="1276" height="1" fill="#000"/>
<polyline points="0.0,524.5 30.3,525.5 60.6,525.5 93.9,521.5 127.2,521.5 160.5,527.5 175.6,527.5 212.0,525.5 242.2,524.5 266.4,519.5 284.6,517.5 290.0,515.5 300.6,512.5 329.4,517.5 349.0,526.5 362.7,523.5 377.8,522.5 396.0,523.5 417.2,522.5 446.0,525.5 464.1,519.5 477.7,520.5 495.9,518.5 514.0,520.5 545.8,524.5 562.5,521.5 598.8,523.5 630.0,529.5 643.6,531.5 661.8,527.5 693.6,531.5 711.7,528.5 725.4,529.5 743.5,525.5 772.3,527.5 802.6,523.5 822.2,524.5 854.0,522.5 875.2,521.5 905.5,518.5 922.2,520.5 940.3,516.5 958.5,519.5 980.0,518.5 991.2,518.5 1006.3,521.5 1024.5,520.5 1038.1,517.5 1056.3,524.5 1066.9,523.5 1095.6,523.5 1106.2,524.5 1119.9,527.5 1137.1,527.5" fill="none" stroke="#d84c10" stroke-width="1" shape-rendering="crispEdges"/>
<rect x="1294" y="468" width="21" height="13" fill="#9a9a9a"/><text x="1294" y="478" fill="#000">100</text>
<rect x="1294" y="493" width="14" height="13" fill="#ff5c5c"/><text x="1294" y="503" fill="#000">70</text>
<rect x="1294" y="510" width="14" height="13" fill="#9a9a9a"/><text x="1294" y="520" fill="#000">50</text>
<rect x="1294" y="526" width="14" height="13" fill="#ff5c5c"/><text x="1294" y="536" fill="#000">30</text>
<rect x="1294" y="551" width="7" height="12" fill="#9a9a9a"/><text x="1294" y="561" fill="#000">0</text>
<text x="8" y="480" fill="#dc4814" textLength="195.3">RSI(XAG/USD.Cloture, 21): 35,04</text>
<rect x="0" y="565" width="1277" height="1" fill="#c3cde0"/>
<rect x="1276" y="565" width="1" height="23" fill="#c3cde0"/><rect x="1277" y="565" width="1" height="23" fill="#e1e6ef"/>
<rect x="0" y="565" width="1" height="23" fill="#e1e6ef"/>
<rect x="1291" y="566" width="1" height="22" fill="#9aa6ba"/>
<rect x="1287" y="573" width="4" height="1" fill="#9aa6ba"/>
<rect x="0" y="586" width="1278" height="2" fill="#e3e5e9"/>
<rect x="-2" y="583" width="11" height="3" fill="#097efa"/>
<rect x="15" y="579" width="11" height="7" fill="#097efa"/>
<rect x="31" y="581" width="11" height="5" fill="#097efa"/>
<rect x="47" y="581" width="11" height="5" fill="#097efa"/>
<rect x="64" y="583" width="11" height="3" fill="#097efa"/>
<rect x="80" y="585" width="11" height="1" fill="#097efa"/>
<rect x="97" y="583" width="11" height="3" fill="#097efa"/>
<rect x="113" y="582" width="11" height="4" fill="#097efa"/>
<rect x="130" y="577" width="11" height="9" fill="#097efa"/>
<rect x="146" y="574" width="11" height="12" fill="#097efa"/>
<rect x="162" y="581" width="11" height="5" fill="#097efa"/>
<rect x="179" y="585" width="11" height="1" fill="#097efa"/>
<rect x="195" y="582" width="11" height="4" fill="#097efa"/>
<rect x="212" y="583" width="11" height="3" fill="#097efa"/>
<rect x="228" y="579" width="11" height="7" fill="#097efa"/>
<rect x="245" y="580" width="11" height="6" fill="#097efa"/>
<rect x="261" y="584" width="11" height="2" fill="#097efa"/>
<rect x="277" y="585" width="11" height="1" fill="#097efa"/>
<rect x="294" y="583" width="11" height="3" fill="#097efa"/>
<rect x="310" y="583" width="11" height="3" fill="#097efa"/>
<rect x="327" y="583" width="11" height="3" fill="#097efa"/>
<rect x="343" y="578" width="11" height="8" fill="#097efa"/>
<rect x="360" y="581" width="11" height="5" fill="#097efa"/>
<rect x="376" y="585" width="11" height="1" fill="#097efa"/>
<rect x="392" y="582" width="11" height="4" fill="#097efa"/>
<rect x="409" y="581" width="11" height="5" fill="#097efa"/>
<rect x="425" y="581" width="11" height="5" fill="#097efa"/>
<rect x="442" y="576" width="11" height="10" fill="#097efa"/>
<rect x="458" y="580" width="11" height="6" fill="#097efa"/>
<rect x="475" y="585" width="11" height="1" fill="#097efa"/>
<rect x="491" y="582" width="11" height="4" fill="#097efa"/>
<rect x="507" y="581" width="11" height="5" fill="#097efa"/>
<rect x="524" y="579" width="11" height="7" fill="#097efa"/>
<rect x="540" y="577" width="11" height="9" fill="#097efa"/>
<rect x="557" y="582" width="11" height="4" fill="#097efa"/>
<rect x="573" y="585" width="11" height="1" fill="#097efa"/>
<rect x="590" y="583" width="11" height="3" fill="#097efa"/>
<rect x="606" y="582" width="11" height="4" fill="#097efa"/>
<rect x="622" y="582" width="11" height="4" fill="#097efa"/>
<rect x="639" y="578" width="11" height="8" fill="#097efa"/>
<rect x="655" y="582" width="11" height="4" fill="#097efa"/>
<rect x="672" y="584" width="11" height="2" fill="#097efa"/>
<rect x="688" y="580" width="11" height="6" fill="#097efa"/>
<rect x="705" y="581" width="11" height="5" fill="#097efa"/>
<rect x="721" y="581" width="11" height="5" fill="#097efa"/>
<rect x="737" y="577" width="11" height="9" fill="#097efa"/>
<rect x="754" y="581" width="11" height="5" fill="#097efa"/>
<rect x="770" y="584" width="11" height="2" fill="#097efa"/>
<rect x="787" y="583" width="11" height="3" fill="#097efa"/>
<rect x="803" y="583" width="11" height="3" fill="#097efa"/>
<rect x="820" y="582" width="11" height="4" fill="#097efa"/>
<rect x="836" y="581" width="11" height="5" fill="#097efa"/>
<rect x="852" y="583" width="11" height="3" fill="#097efa"/>
<rect x="869" y="585" width="11" height="1" fill="#097efa"/>
<rect x="885" y="582" width="11" height="4" fill="#097efa"/>
<rect x="902" y="582" width="11" height="4" fill="#097efa"/>
<rect x="918" y="581" width="11" height="5" fill="#097efa"/>
<rect x="935" y="576" width="11" height="10" fill="#097efa"/>
<rect x="951" y="581" width="11" height="5" fill="#097efa"/>
<rect x="967" y="585" width="11" height="1" fill="#097efa"/>
<rect x="984" y="584" width="11" height="2" fill="#097efa"/>
<rect x="1000" y="583" width="11" height="3" fill="#097efa"/>
<rect x="1017" y="580" width="11" height="6" fill="#097efa"/>
<rect x="1033" y="580" width="11" height="6" fill="#097efa"/>
<rect x="1050" y="567" width="11" height="19" fill="#097efa"/>
<rect x="1066" y="584" width="11" height="2" fill="#097efa"/>
<rect x="1082" y="581" width="11" height="5" fill="#097efa"/>
<rect x="1099" y="581" width="11" height="5" fill="#097efa"/>
<rect x="1115" y="577" width="11" height="9" fill="#097efa"/>
<rect x="1132" y="583" width="11" height="3" fill="#097efa"/>
<text x="8.1" y="576.6" fill="#2b80fc" textLength="151.5">XAG/USD - Volume: 4 958</text>
<text x="1120.4" y="584" fill="#262660" textLength="156">FXCM Marketscope © 2014</text>
<text x="1294" y="591" fill="#000">0</text>
</svg>
</body></html>
